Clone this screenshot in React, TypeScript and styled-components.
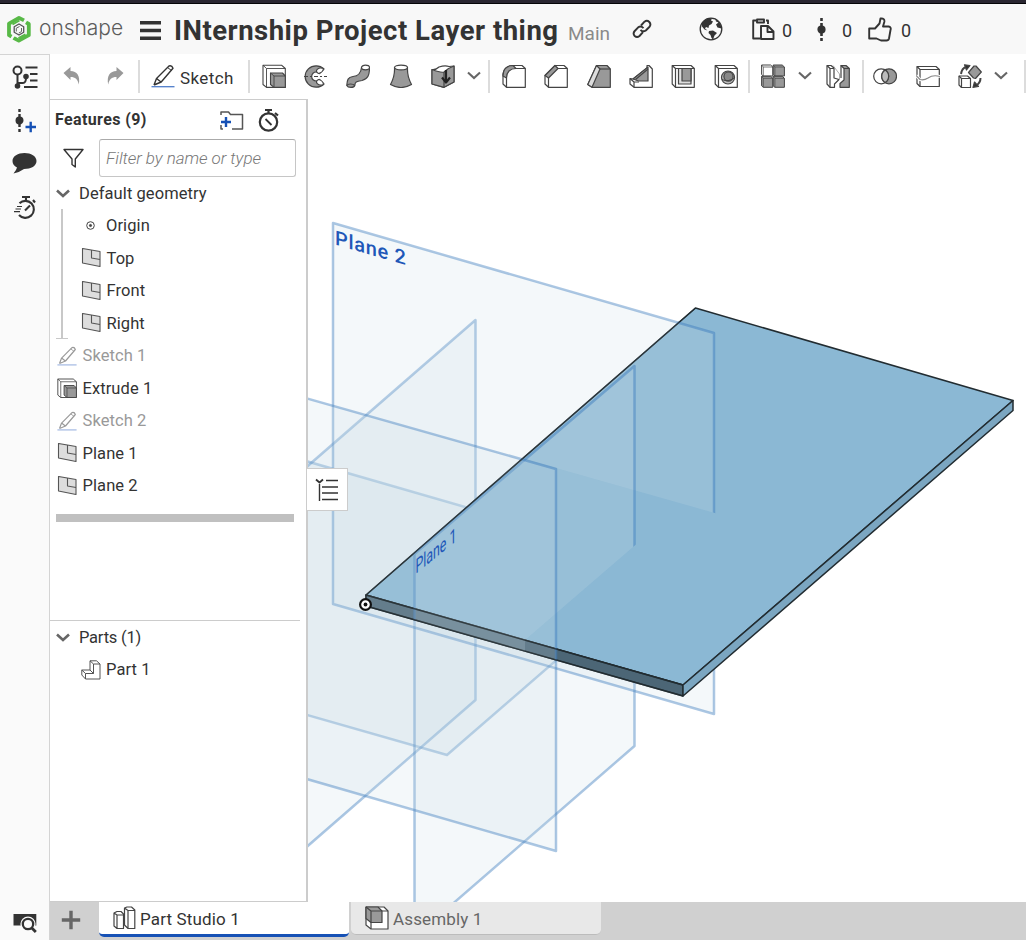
import React from "react";
import styled, { createGlobalStyle } from "styled-components";

const GlobalStyle = createGlobalStyle`
  * { box-sizing: border-box; }
  html, body { margin: 0; padding: 0; }
  body { font-family: Roboto, "Liberation Sans", sans-serif; color: #333; background: #fff; }
`;

const Page = styled.div`
  width: 1026px;
  height: 940px;
  display: flex;
  flex-direction: column;
  overflow: hidden;
`;

const WindowStrip = styled.div`
  flex: 0 0 4px;
  background: #292631;
  border-bottom: 1px solid #050507;
`;

const Header = styled.header`
  flex: 0 0 50px;
  display: flex;
  align-items: center;
  background: #f8f8f8;
  padding-left: 6px;
`;

const Brand = styled.span`
  font-family: Inter, sans-serif;
  font-weight: 300;
  font-size: 21px;
  letter-spacing: -0.05px;
  color: #5c5c5c;
  width: 101px;
  margin: -3px 0 0 7px;
`;

const Title = styled.h1`
  margin: 3px 0 0 13px;
  width: 394px;
  font-size: 27.5px;
  font-weight: 700;
  letter-spacing: 0.5px;
  white-space: nowrap;
`;

const Workspace = styled.span`
  color: #8a8a8a;
  font-size: 19px;
  width: 64px;
  margin-top: 8px;
`;

const Count = styled.span<{ $w: number }>`
  font-size: 18px;
  width: ${(p) => p.$w}px;
  text-align: right;
  margin-top: 2px;
`;

const Spacer = styled.span<{ $w: number }>`
  flex: 0 0 ${(p) => p.$w}px;
`;

const Body = styled.div`
  flex: 1;
  min-height: 0;
  display: flex;
`;

const Rail = styled.nav`
  flex: 0 0 50px;
  background: #fafafa;
  border-right: 1px solid #d4d4d4;
  border-top: 1px solid #d4d4d4;
  display: flex;
  flex-direction: column;
  align-items: center;
  padding: 7px 0 5px;
`;

const RailItem = styled.div<{ $h: number; $push?: boolean }>`
  height: ${(p) => p.$h}px;
  display: flex;
  align-items: center;
  margin-top: ${(p) => (p.$push ? "auto" : "0")};
`;

const Main = styled.div`
  flex: 1;
  min-width: 0;
  display: flex;
  flex-direction: column;
`;

const Toolbar = styled.div`
  flex: 0 0 45px;
  display: flex;
  align-items: center;
  overflow: hidden;
`;

const Tool = styled.div<{ $w?: number }>`
  flex: 0 0 ${(p) => p.$w ?? 42.3}px;
  display: flex;
  align-items: center;
  justify-content: center;
  padding-bottom: 2px;
`;

const Rule = styled.span<{ $l?: number; $r?: number }>`
  flex: 0 0 2px;
  height: 33px;
  background: #dcdcdc;
  margin: 0 ${(p) => p.$r ?? 0}px 0 ${(p) => p.$l ?? 0}px;
`;

const SketchButton = styled.div`
  flex: 0 0 108px;
  display: flex;
  align-items: center;
  gap: 5px;
  padding-left: 11px;
  font-size: 17px;
  letter-spacing: 0.4px;
  svg { margin-top: -1px; }
  span { margin-top: 3px; }
`;

const Workarea = styled.div`
  flex: 1;
  min-height: 0;
  display: flex;
`;

const Panel = styled.aside`
  flex: 0 0 258px;
  display: flex;
  flex-direction: column;
  border-top: 1px solid #ccc;
  border-right: 2px solid #ccc;
  border-bottom: 1px solid #ccc;
`;

const PanelHead = styled.div`
  flex: 0 0 39px;
  display: flex;
  align-items: center;
  padding: 1px 0 0 5px;
  font-size: 16px;
  font-weight: 700;
  letter-spacing: 0.38px;
`;

const PanelTitle = styled.span`
  width: 164px;
  margin-top: -1px;
`;

const FilterRow = styled.div`
  flex: 0 0 38px;
  display: flex;
  align-items: center;
  padding-left: 12px;
`;

const FilterBox = styled.div`
  margin-left: 14px;
  width: 197px;
  height: 38px;
  border: 1px solid #c6c6c6;
  border-top-color: #aaa;
  border-radius: 3px;
  padding-left: 6px;
  display: flex;
  align-items: center;
  font-style: italic;
  font-weight: 300;
  font-size: 17px;
  letter-spacing: -0.05px;
  color: #777;
`;

const Tree = styled.div`
  position: relative;
  flex: 0 0 337px;
`;

const Row = styled.div<{ $indent: number; $gap: number; $muted?: boolean }>`
  height: 32.5px;
  display: flex;
  align-items: center;
  padding-left: ${(p) => p.$indent}px;
  gap: ${(p) => p.$gap}px;
  font-size: 16.5px;
  letter-spacing: 0.08px;
  color: ${(p) => (p.$muted ? "#999" : "#333")};
  svg { flex: none; }
`;

const Branch = styled.div`
  position: absolute;
  left: 11px;
  top: 32px;
  width: 2px;
  height: 130px;
  background: #c8c8c8;
  &::after {
    content: "";
    position: absolute;
    left: -5px;
    bottom: 0;
    width: 12px;
    height: 1px;
    background: #c8c8c8;
  }
`;

const RollbackBar = styled.div`
  width: 238px;
  height: 8px;
  margin: 12px 0 0 6px;
  background: #c0c0c0;
`;

const PartsSection = styled.section`
  width: 250px;
  margin-top: 98px;
  border-top: 1px solid #ccc;
`;

const PartsLabel = styled.span`
  letter-spacing: -0.22px;
`;

const Canvas = styled.div`
  flex: 1;
  position: relative;
  min-width: 0;
`;

const Scene = styled.svg`
  display: block;
  text { font-family: Roboto, sans-serif; fill: #2057b8; }
`;

const ListToggle = styled.div`
  position: absolute;
  left: -1px;
  top: 369px;
  width: 41px;
  height: 43px;
  background: #fff;
  border: 1px solid #ccc;
  border-left: 0;
  display: flex;
  align-items: center;
  justify-content: center;
`;

const TabBar = styled.footer`
  flex: 0 0 38px;
  display: flex;
  align-items: flex-start;
  background: #d0d0d0;
`;

const AddTab = styled.div`
  width: 49px;
  height: 36px;
  padding-left: 11px;
  display: flex;
  align-items: center;
`;

const Tab = styled.div<{ $active?: boolean }>`
  width: 250px;
  height: ${(p) => (p.$active ? 35 : 33)}px;
  margin-right: 2px;
  padding: ${(p) => (p.$active ? "1px 0 0 14px" : "0 0 0 14px")};
  display: flex;
  align-items: center;
  gap: 4px;
  font-size: 17px;
  letter-spacing: 0.15px;
  color: ${(p) => (p.$active ? "#333" : "#666")};
  background: ${(p) => (p.$active ? "#fff" : "#e8e8e8")};
  border-bottom: ${(p) => (p.$active ? "3px solid #1651b5" : "1px solid #bcbcbc")};
  border-radius: 0 0 5px 5px;
  svg { margin-top: -1px; }
  span { margin-top: 1px; }
`;

type IconProps = { w?: number; h?: number; children: React.ReactNode; sw?: number; color?: string };
const Icon = ({ w = 24, h = 24, sw = 1.2, color = "#444", children }: IconProps) => (
  <svg width={w} height={h} viewBox={`0 0 ${w} ${h}`} fill="none" stroke={color} strokeWidth={sw} strokeLinejoin="round">
    {children}
  </svg>
);
const G = "#999";

const Pencil = ({ size = 24, muted = false }: { size?: number; muted?: boolean }) => (
  <svg width={size} height={size} viewBox="0 0 24 24" fill="none" stroke={muted ? "#999" : "#333"} strokeWidth="1.4" strokeLinejoin="round">
    <path d="M3 21L5.5 14.5L18 2Q20.8 1 22 4.2L10.2 18L3 21M5.5 14.5L10 18" />
    <path d="M16.5 3.5L20.5 6.5" strokeWidth="1" />
    <path d="M.5 22.7H23.5" stroke={muted ? "#98b0df" : "#4f7dca"} strokeWidth="1.3" />
  </svg>
);

const Extrude = ({ size = 24 }: { size?: number }) => (
  <svg width={size} height={size} viewBox="0 0 24 24" fill="none" stroke="#444" strokeWidth="1.1" strokeLinejoin="round">
    <path d="M1 1.2H19.5L23.3 4.5V23.4H4.5L1 20.5Z" fill="#fff" />
    <path d="M1 1.2L4.5 4.5V23.4M4.5 4.5H23.3" strokeWidth=".9" />
    <path d="M8.5 9H20.5L23.3 12V23.4H12L8.5 20.5Z" fill={G} />
    <path d="M8.5 9L12 12V23.4M12 12H23.3" strokeWidth=".9" />
  </svg>
);

const PlaneIcon = () => (
  <Icon w={20} h={20} color="#555" sw={1.1}>
    <path d="M1.5 .5L19 3.5V18.5L1.5 15Z" fill="#ddd" />
    <path d="M10.5 2V10L19 11.5" />
  </Icon>
);

const Chevron = ({ w = 14, sw = 2.1 }: { w?: number; sw?: number }) => (
  <svg width={w} height={9} viewBox="0 0 14 9" fill="none" stroke="#666" strokeWidth={sw}>
    <path d="M1 1.5L7 7L13 1.5" />
  </svg>
);

const Undo = () => (
  <Icon w={18} h={20} color="none">
    <path d="M0.5 7L7.5 1V5C14 5 17.5 10 15.8 18.5C14.5 13 12.5 11 7.5 11V14Z" fill={G} />
  </Icon>
);
const Redo = () => (
  <Icon w={18} h={20} color="none">
    <path d="M17.5 7L10.5 1V5C4 5 .5 10 2.2 18.5C3.5 13 5.5 11 10.5 11V14Z" fill={G} />
  </Icon>
);

const Stopwatch = () => (
  <Icon w={24} h={25} color="#333" sw={2.2}>
    <circle cx="11.5" cy="14" r="8.7" />
    <path d="M8 2H15M11.5 2V5M18 5L21 7.5" />
    <path d="M8.5 11L14.5 17" strokeWidth="1.8" />
  </Icon>
);

const Globe = () => (
  <Icon w={24} h={24} color="#333" sw={1.3}>
    <circle cx="12" cy="12" r="10.8" />
    <path d="M2.5 7C4.5 3 8.5 1 13 1.3L12 3.5L14 4.5L12.5 7L10 8.5L9.5 11L7 10L6 11.5L8.5 13.5L5.5 12.5L3 9.5Z" fill="#333" stroke="none" />
    <path d="M10 14L14 13.5L18 16L15.5 18.5L14 22.5L12.5 21L11.5 18L9.5 16Z" fill="#333" stroke="none" />
    <path d="M16.5 2.5L17 4.5L19.5 5.5L17 7.5L18.5 10.5L22.5 11.5C22.5 8 20 4 16.5 2.5Z" fill="#333" stroke="none" />
  </Icon>
);

const Logo = () => (
  <Icon w={26} h={29} color="#58b947" sw={3.8}>
    <path d="M18 5.4L13 2.9L3 8.6V20.2L5.5 21.6" />
    <path d="M20 7.4L22.8 9V20.2L12.8 25.7L7.5 22.8" />
    <path d="M6.5 9.5L13.5 5.5M19.5 19.3L12.5 23.2" strokeWidth="2" />
    <path d="M13 9L8.2 11.8V17.3L13 20L17.7 17.3V11.8Z" stroke="#555" strokeWidth="1.3" fill="#f8f8f8" />
    <path d="M13.5 11.5L10.3 13.2V16.5M15.5 13V16.6L12.8 18" stroke="#666" strokeWidth="1" />
    <path d="M17 8.5L22 4.5M4 24.5L9 20.5" stroke="#f8f8f8" strokeWidth="1" />
  </Icon>
);

const LeftTools = () => (
  <>
    <Tool><Extrude /></Tool>
    <Tool>
      <Icon>
        <path d="M20 5A11 10.7 0 1 0 20 20L15.5 15.5A4.5 4.5 0 1 1 15.5 9.5Z" fill={G} />
        <path d="M14.5 9.5A4.5 3 0 0 1 19.5 4.5A5 3.5 -35 0 1 14.5 9.5ZM14.5 15.5A5 3.5 35 0 1 19.5 20.5A4.5 3 0 0 1 14.5 15.5Z" fill="#fff" />
        <path d="M0 12.5H23" strokeDasharray="4 2 2 2" />
      </Icon>
    </Tool>
    <Tool>
      <Icon>
        <path d="M.8 21.5C1 16 2 13 7 12.5C13 12 15 9 15.5 3.5H23.5C23.5 11 22 15 16 16.5C10 17.5 9 18 8.8 21.5C8 24 2 24 .8 21.5Z" fill={G} />
        <ellipse cx="19.5" cy="3.5" rx="4" ry="2.3" fill="#fff" />
        <path d="M.8 21.5C2 19.5 7 19.5 8.8 21.5" />
      </Icon>
    </Tool>
    <Tool>
      <Icon>
        <path d="M5.5 3.5C6 12 4 16 1.5 20.5Q12 26.5 22.5 20.5C20 16 18 12 18.5 3.5Z" fill={G} />
        <ellipse cx="12" cy="3.5" rx="6.5" ry="2.4" fill="#fff" />
      </Icon>
    </Tool>
    <Tool>
      <Icon>
        <path d="M1 5.5Q5 6 8 3Q14 1 18 2.5L23 2V18L13 23.3L1 20Z" fill="#fff" />
        <path d="M1 5.5Q10 9 13 8Q17 4 23 2V18L13 23.3L1 20Z" fill={G} />
        <path d="M13 8V23.3" />
        <path d="M15 6V17" stroke="#222" strokeWidth="2.2" />
        <path d="M11 13.5L15 18.5L19 13.5" stroke="#222" strokeWidth="2.2" />
      </Icon>
    </Tool>
    <Tool $w={20}><Chevron /></Tool>
  </>
);

const ModifyTools = () => (
  <>
    <Tool>
      <Icon>
        <path d="M1 12C1 5 5 1.5 11 1.5H20L23.3 4.5V23.3H4.5L1 20Z" fill="#fff" />
        <path d="M1 12L4.5 14C4.5 8 8 4.5 14 4.5L11 1.5C5 1.5 1 5 1 12Z" fill={G} />
        <path d="M4.5 14V23.3M14 4.5H23.3" />
      </Icon>
    </Tool>
    <Tool>
      <Icon>
        <path d="M1 11.5L11 1.5H20L23.3 4.5V23.3H4.5L1 20Z" fill="#fff" />
        <path d="M1 11.5L4.5 14L14 4.5L11 1.5Z" fill={G} />
        <path d="M4.5 14V23.3M14 4.5H23.3" />
      </Icon>
    </Tool>
    <Tool>
      <Icon>
        <path d="M.8 20.5L9.5 1.5H20L23.3 5V23.3H5Z" fill={G} />
        <path d="M.8 20.5L9.5 1.5L13 5L5 23.3Z" fill="#ddd" />
        <path d="M13 5H23.3" />
      </Icon>
    </Tool>
    <Tool>
      <Icon>
        <path d="M18 1.5H20L23.3 5V23.3H5L1 20V14.5L4 15L18 4Z" fill="#fff" />
        <path d="M4 15L19 3V17H9.5Z" fill={G} />
        <path d="M1 14.5L5 18V23.3M5 18H10M6.5 15.5L19 5" />
      </Icon>
    </Tool>
    <Tool>
      <Icon>
        <path d="M1.2 1.5H20L23.3 4.5V23.3H4.5L1.2 20Z" fill="#fff" />
        <path d="M7.5 4.5H20V20H7.5Z" fill="#ddd" />
        <path d="M11 4.5H20V17H11Z" fill={G} />
        <path d="M1.2 1.5L4.5 4.5V23.3M4.5 4.5H23.3" />
      </Icon>
    </Tool>
    <Tool>
      <Icon>
        <path d="M1.2 1.5H20L23.3 4.5V23.3H4.5L1.2 20Z" fill="#fff" />
        <path d="M1.2 1.5L4.5 4.5V23.3M4.5 4.5H23.3" />
        <circle cx="14" cy="13.5" r="6.5" fill="#bbb" />
        <circle cx="14.5" cy="12.5" r="4.6" fill="#888" />
        <path d="M8 15.5Q14 18.5 20 14" strokeWidth="1" />
      </Icon>
    </Tool>
  </>
);

const PatternIcon = () => (
  <Icon sw={1}>
    {[[.6, 1], [12.2, 1], [.6, 12.3], [12.2, 12.3]].map(([x, y], i) => (
      <g key={i}>
        <path d={`M${x} ${y}h9l2.2 2v9h-9.5l-1.7 -1.5z`} fill={i === 0 ? "#fff" : G} />
        <path d={`M${x} ${y}l1.7 2v9M${x + 1.7} ${y + 2}h9.5`} strokeWidth=".7" />
      </g>
    ))}
  </Icon>
);

const RightTools = () => (
  <>
    <Tool><PatternIcon /></Tool>
    <Tool $w={21}><Chevron /></Tool>
    <Tool $w={46.5}>
      <Icon>
        <path d="M1 1.5H5L8 4V14L13 15.5L8.5 20V23.3H4L1 20Z" fill="#fff" />
        <path d="M1 1.5L4 4.5V23.3M4 4.5H8" />
        <path d="M7 1.5L13.5 10V15" strokeWidth=".7" stroke="#888" />
        <path d="M15 1.5H20L23.3 4.5V23.3H14V19.5L18 16V4.5Z" fill={G} />
        <path d="M18 4.5H23.3M15 1.5V14" />
      </Icon>
    </Tool>
    <Rule $r={.5} />
    <Tool>
      <Icon>
        <circle cx="16" cy="12.3" r="7.5" fill={G} />
        <circle cx="8.2" cy="12.3" r="7.5" />
        <path d="M12.2 6A7.5 7.5 0 0 1 12.2 18.6A7.5 7.5 0 0 1 12.2 6Z" fill="#bbb" />
      </Icon>
    </Tool>
    <Tool>
      <Icon>
        <path d="M1 2.5H20L23.3 5.5V22.5H4L1 19.5Z" fill="#fff" />
        <path d="M1 2.5L4 5.5V22.5M4 5.5H23.3" />
        <path d="M0 11.5L4 15.5Q8 16.5 12 14Q17 10.5 24 12.5" stroke="#fff" strokeWidth="3" />
        <path d="M0 11.5L4 15.5Q8 16.5 12 14Q17 10.5 24 12.5" stroke="#888" />
      </Icon>
    </Tool>
    <Tool>
      <Icon>
        <path d="M1 12H9.5L12.5 14.5V23.5H3.5L1 21Z" fill="#fff" />
        <path d="M1 12L3.5 14.5V23.5M3.5 14.5H12.5" />
        <path d="M10.5 8.5L16 2H18L23.3 8L17.5 14.5L15.5 14L10.5 8.5Z" fill={G} />
        <path d="M3 10Q4 4 8 3" strokeWidth="2" /><path d="M6.5 .8L12 1.5L8.5 6Z" fill="#333" />
        <path d="M22.5 14Q22.5 19 18 21.5" strokeWidth="2" /><path d="M15 23.3L16.5 18L20.5 22.5Z" fill="#333" />
      </Icon>
    </Tool>
    <Tool $w={21}><Chevron /></Tool>
    <Rule $l={12.5} />
  </>
);

const features: { name: string; kind: "plane" | "sketch" | "extrude"; muted?: boolean }[] = [
  { name: "Sketch 1", kind: "sketch", muted: true },
  { name: "Extrude 1", kind: "extrude" },
  { name: "Sketch 2", kind: "sketch", muted: true },
  { name: "Plane 1", kind: "plane" },
  { name: "Plane 2", kind: "plane" },
];

const planes = {
  top: "66,646 285,455 666,565 447,755",
  right: "256,511 475.5,320 475.5,700 256,891",
  front: "175,361 556,469 556,851 175,741",
  one: "414.5,554 634.5,366 634.5,746 414.5,937",
  two: "333,223 714,333 714,714 333,604",
};

const planeStyle = {
  fill: "rgb(202,219,231)",
  fillOpacity: 0.2,
  stroke: "#4280c0",
  strokeOpacity: 0.44,
  strokeWidth: 2.5,
  strokeLinejoin: "round" as const,
};

const Model = () => (
  <Scene width={718} height={803} viewBox="308 99 718 803">
    <defs>
      <clipPath id="board"><path d="M366 594L695 307L1014 400V411L683 697L366 606Z" /></clipPath>
      <clipPath id="aboveTwo"><path d="M333 223H720V514.5L528 460L333 590Z" /></clipPath>
      <clipPath id="leftOfOne"><path d="M400 340H640V541L525 640V660H400Z" /></clipPath>
    </defs>
    <g {...planeStyle}>
      <polygon points={planes.top} />
      <polygon points={planes.right} />
      <polygon points={planes.one} />
      <polygon points={planes.two} />
      <polygon points={planes.front} />
    </g>
    <g stroke="#222c31" strokeWidth="1.5" strokeLinejoin="round">
      <path d="M366 595L695.5 308L1013 400.5L683 685Z" fill="#8bb8d4" />
      <path d="M366 595L683 685V696L366 606Z" fill="#4c6676" />
      <path d="M683 685L1013 400.5V410.5L683 696Z" fill="#7ba6c1" />
    </g>
    <g clipPath="url(#board)">
      <g {...planeStyle} strokeOpacity={0.5}>
        <g clipPath="url(#aboveTwo)"><polygon points={planes.two} /></g>
        <g clipPath="url(#leftOfOne)"><polygon points={planes.one} /></g>
        <polygon points={planes.front} />
      </g>
    </g>
    <path d="M366 606V595L695.5 308M366 595L683 685M366 606L683 696" fill="none" stroke="#222c31" strokeWidth="1.3" strokeOpacity=".75" />
    <text transform="matrix(1 .289 0 1 335 244.5)" fontSize="20" fontWeight="500" textLength="71">Plane 2</text>
    <text transform="matrix(.62 -.5 0 1 415.5 574)" fontSize="20" textLength="66">Plane 1</text>
    <circle cx="365.5" cy="604.5" r="5.4" fill="#fff" stroke="#111" strokeWidth="2.2" />
    <circle cx="365.5" cy="604.5" r="1.9" fill="#111" />
  </Scene>
);

export default function App() {
  return (
    <>
      <GlobalStyle />
      <Page>
        <WindowStrip />
        <Header>
          <Logo />
          <Brand>onshape</Brand>
          <Icon w={21} h={22} color="#333" sw={3.6}><path d="M0 4.7H21M0 12.5H21M0 20.3H21" /></Icon>
          <Title>INternship Project Layer thing</Title>
          <Workspace>Main</Workspace>
          <Icon w={20} h={20} color="#333" sw={1.9}>
            <path d="M9 6.5L12.5 2.7Q15 .8 17.3 3Q19.5 5.5 17.3 8L13.8 11.5Q11 13.5 8.5 10.8" />
            <path d="M11 13.2L7.5 17Q5 19 2.7 17Q.5 14.5 2.7 12L6.2 8.3Q9 6.5 11.5 9.2" />
          </Icon>
          <Spacer $w={47} />
          <Globe />
          <Spacer $w={29} />
          <Icon w={23} h={22} color="#333" sw={1.9}>
            <path d="M4 2.5H1.2V20.5H8M14 2.5H16V6M5 1.5H12V4.5H5Z" />
            <path d="M9 8H16L21.5 13.5V21H9ZM15.5 8V14H21.5" fill="#f8f8f8" />
          </Icon>
          <Count $w={17}>0</Count>
          <Spacer $w={22} />
          <Icon w={14} h={24} color="#333" sw={2.6}><path d="M7.5 1V24" strokeDasharray="3 2" /><circle cx="7.5" cy="12.5" r="2.8" fill="#333" /></Icon>
          <Count $w={24}>0</Count>
          <Spacer $w={16} />
          <Icon w={24} h={25} color="#333" sw={1.9}>
            <path d="M1.2 11.5H7L11.5 6.5L12.5 1.5Q17 1 16.3 5L15 9.5H20.5Q23.5 10 22.5 13L21 21.5Q20.5 23.7 18 23.5H13L8.5 21.5H1.2Z" />
          </Icon>
          <Count $w={19}>0</Count>
        </Header>
        <Body>
          <Rail>
            <RailItem $h={29}>
              <Icon w={26} h={24} color="#333" sw={2}>
                <circle cx="5.5" cy="5.5" r="4" /><path d="M5.5 9.5V21M5.5 18H11Q14 18 14 12.5M13.5 2.5H25.5M18 9H25.5M18 15.5H25.5M12 22H25.5" />
                <circle cx="5.5" cy="21" r="1.8" fill="#333" /><circle cx="14" cy="11.5" r="1.8" fill="#333" />
              </Icon>
            </RailItem>
            <RailItem $h={59}>
              <Icon w={24} h={24} color="#333" sw={2.4}>
                <path d="M6.5 0V23" strokeDasharray="3 2" /><circle cx="6.5" cy="11.5" r="2.8" fill="#333" />
                <path d="M12.5 18H23M17.7 12.8V23.2" stroke="#1651b5" strokeWidth="2.4" />
              </Icon>
            </RailItem>
            <RailItem $h={25}>
              <Icon w={25} h={22} color="none"><path d="M12.5 1C19 1 24.5 4 24.5 9S19 17 12 17Q8 20 1.5 21.5Q4.5 18 5 15.5Q.5 13 .5 9C.5 4 6 1 12.5 1Z" fill="#333" /></Icon>
            </RailItem>
            <RailItem $h={65}>
              <Icon w={24} h={25} color="#333" sw={2.1}>
                <path d="M6.5 8.2A8.5 8.5 0 1 1 6 20" /><path d="M9 2H17M13 2V5M20 5L22 7.5M12 15.5L17 10.5" />
                <path d="M4 11.5H9M2.5 14H8M1 16.7H7" strokeWidth="1.2" />
              </Icon>
            </RailItem>
            <RailItem $h={24} $push>
              <Icon w={24} h={20} color="#333" sw={2.3}>
                <path d="M.5 1H23.3V12.5H.5Z" fill="#333" stroke="none" />
                <circle cx="15" cy="11" r="7.6" fill="#fafafa" stroke="none" />
                <circle cx="15" cy="11" r="5.2" /><path d="M18.8 15L22.8 19" strokeWidth="2.8" />
              </Icon>
            </RailItem>
          </Rail>
          <Main>
            <Toolbar>
              <Tool $w={43}><Undo /></Tool>
              <Tool $w={44}><Redo /></Tool>
              <Rule $l={1} />
              <SketchButton><Pencil /><span>Sketch</span></SketchButton>
              <Rule $r={2.5} />
              <LeftTools />
              <Rule $l={4.5} $r={2.5} />
              <ModifyTools />
              <Rule $l={1} $r={2} />
              <RightTools />
            </Toolbar>
            <Workarea>
              <Panel>
                <PanelHead>
                  <PanelTitle>Features (9)</PanelTitle>
                  <Icon w={26} h={20} color="#555" sw={1.5}>
                    <path d="M2 5V2H9.5L11.5 4.5H23.5V19H13M2 15V19H4" />
                    <path d="M2 12H12M7 7V17" stroke="#1651b5" strokeWidth="2.4" />
                  </Icon>
                  <Spacer $w={12} />
                  <Stopwatch />
                </PanelHead>
                <FilterRow>
                  <Icon w={23} h={20} color="#333" sw={1.4}><path d="M2 1.5H21L13.3 11V19L10 16.5V11Z" /></Icon>
                  <FilterBox>Filter by name or type</FilterBox>
                </FilterRow>
                <Tree>
                  <Branch />
                  <Row $indent={5} $gap={8}><Chevron w={16} sw={2.6} />Default geometry</Row>
                  <Row $indent={36} $gap={11}>
                    <Icon w={9} h={9} sw={1}><circle cx="4.5" cy="4.5" r="3.8" /><circle cx="4.5" cy="4.5" r="1.1" fill="#444" /></Icon>
                    Origin
                  </Row>
                  {["Top", "Front", "Right"].map((n) => (
                    <Row key={n} $indent={31} $gap={5.5}><PlaneIcon />{n}</Row>
                  ))}
                  {features.map((f) => (
                    <Row key={f.name} $indent={7} $gap={5.5} $muted={f.muted}>
                      {f.kind === "plane" && <PlaneIcon />}
                      {f.kind === "sketch" && <Pencil size={20} muted />}
                      {f.kind === "extrude" && <Extrude size={20} />}
                      {f.name}
                    </Row>
                  ))}
                  <RollbackBar />
                </Tree>
                <PartsSection>
                  <Row $indent={5} $gap={8}><Chevron w={16} sw={2.6} /><PartsLabel>Parts (1)</PartsLabel></Row>
                  <Row $indent={31} $gap={5}>
                    <Icon w={20} h={20} sw={1} color="#555">
                      <path d="M.8 10H9V.8H15.5L19 4V19H4.5L.8 15Z" fill="#fff" />
                      <path d="M.8 10L4.5 13.5V19M4.5 13.5H12.5V4H19M9 .8L12.5 4M9 10L12.5 13.5" />
                    </Icon>
                    Part 1
                  </Row>
                </PartsSection>
              </Panel>
              <Canvas>
                <Model />
                <ListToggle>
                  <Icon w={24} h={24} color="#333" sw={1.4}>
                    <path d="M1 1.5L4.5 4.5L8 1.5" strokeWidth="1.8" /><path d="M4.5 6V23M11 2.5H23M7 9H23M7 15H23M7 21.5H23" />
                  </Icon>
                </ListToggle>
              </Canvas>
            </Workarea>
            <TabBar>
              <AddTab><Icon w={20} h={20} color="#666" sw={3.4}><path d="M10 .8V19.2M.8 10H19.2" /></Icon></AddTab>
              <Tab $active>
                <Icon w={23} h={24} sw={1.2}>
                  <path d="M1 7L4 5.5H8L10.5 8V22.5H4L1 20ZM1 7L4 9V22.5M4 9H10.5" fill="#fff" />
                  <path d="M11.5 2L14 1H18.5L21.8 4V22.5H15L11.5 19ZM11.5 2L15 4.5V22.5M15 4.5H21.8" fill="#fff" />
                </Icon>
                <span>Part Studio 1</span>
              </Tab>
              <Tab>
                <Icon w={24} h={24}>
                  <path d="M1 1H19L23 5V23H6L1 19Z" fill="#fff" />
                  <path d="M1 1H13L17 5V16.5H6L1 12.5Z" fill={G} />
                  <path d="M1 1L6 5V23M6 5H23" />
                </Icon>
                <span>Assembly 1</span>
              </Tab>
            </TabBar>
          </Main>
        </Body>
      </Page>
    </>
  );
}
